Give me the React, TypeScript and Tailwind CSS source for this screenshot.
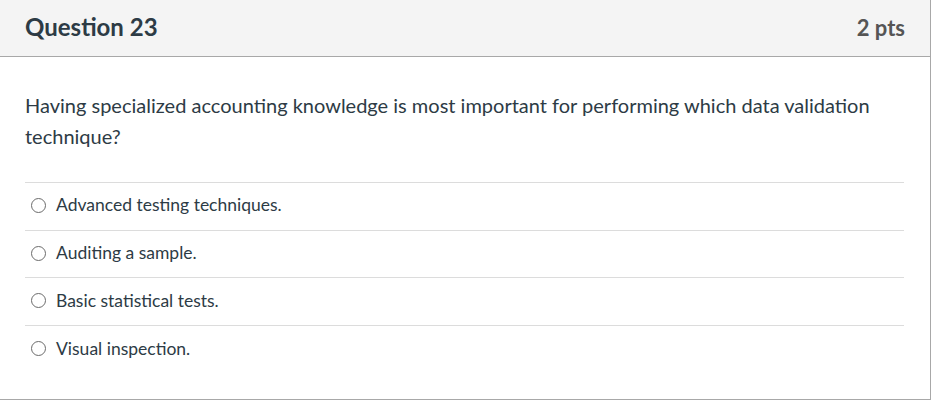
import React from 'react';

const answers = [
    'Advanced testing techniques.',
    'Auditing a sample.',
    'Basic statistical tests.',
    'Visual inspection.',
];

export default function App() {
    return (
        <div className="w-[942px] h-[412px] bg-white" style={{ fontFamily: 'Lato, "Open Sans", sans-serif' }}>
            <div className="w-[931px] h-[400px] border-r border-b border-[#a8a8a8] bg-white flex flex-col">
                <div className="h-[57px] shrink-0 bg-[#f4f4f4] border-b border-[#a8a8a8] flex items-center justify-between pl-[25px] pr-[25px]">
                    <h2 className="text-[24px] font-bold text-[#2d3b45] -mt-[2px]">Question 23</h2>
                    <span className="text-[22px] font-bold text-[#555] -mt-[2px]">2 pts</span>
                </div>
                <div className="pl-[25px] pr-[26px] pt-[33px]">
                    <p className="text-[20px] leading-[31px] text-[#2d3b45]">
                        Having specialized accounting knowledge is most important for performing which data validation technique?
                    </p>
                    <div className="mt-[30px] border-t border-[#dcdcdc]">
                        {answers.map((a, i) => (
                            <div
                                key={a}
                                className={`h-[47.7px] flex items-center gap-[10px] pl-[6px] pb-[2px] ${i < answers.length - 1 ? 'border-b border-[#dcdcdc]' : ''}`}
                            >
                                <span className="w-[15px] h-[15px] rounded-full border border-[#6b6b6b] bg-white" />
                                <span className="text-[17.5px] text-[#2d3b45]">{a}</span>
                            </div>
                        ))}
                    </div>
                </div>
            </div>
        </div>
    );
}
